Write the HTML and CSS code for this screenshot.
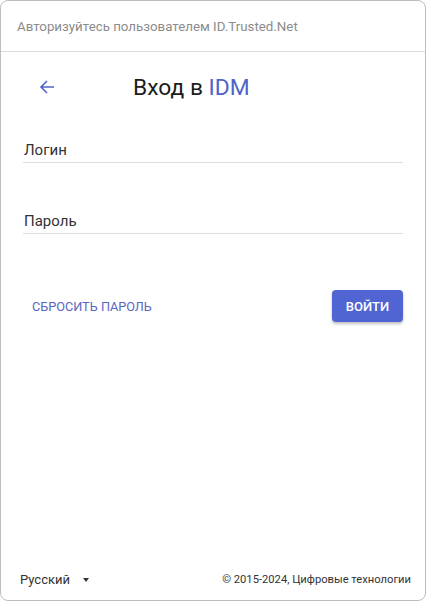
FILE: index.html
```html
<!DOCTYPE html>
<html lang="ru">
  <head>
    <meta charset="UTF-8" />
    <meta name="viewport" content="width=device-width, initial-scale=1.0" />
    <title>Вход в IDM</title>
    <link rel="stylesheet" href="styles.css">
  </head>
  <body>
    <main class="card">
      <header class="top">Авторизуйтесь пользователем ID.Trusted.Net</header>

      <section class="login">
        <div class="title">
          <button class="back" aria-label="Назад">
            <svg width="16" height="16" viewBox="0 0 16 16">
              <path d="M15 8H2.5M8 2L2 8l6 6" fill="none" stroke="currentColor" stroke-width="1.6" />
            </svg>
          </button>
          <h1>Вход в <span>IDM</span></h1>
        </div>

        <label class="field">
          <input type="text" placeholder="Логин" />
        </label>
        <label class="field">
          <input type="password" placeholder="Пароль" />
        </label>

        <div class="actions">
          <a href="#" class="reset">Сбросить пароль</a>
          <button class="enter">Войти</button>
        </div>
      </section>

      <footer>
        <div class="lang">Русский <span class="caret"></span></div>
        <div class="copy">© 2015-2024, Цифровые технологии</div>
      </footer>
    </main>
  </body>
</html>
```

FILE: styles.css
```css
*,
*::before,
*::after {
  box-sizing: border-box;
  margin: 0;
  padding: 0;
}
html {
  font-family: Roboto, "Liberation Sans", sans-serif;
}
body {
  background: #fff;
  width: 427px;
  height: 601px;
}
.card {
  width: 426px;
  height: 601px;
  border: 1px solid #bdbdbd;
  border-radius: 8px;
  display: flex;
  flex-direction: column;
  overflow: hidden;
}
.top {
  height: 51px;
  border-bottom: 1px solid #dcdcdc;
  padding-left: 16px;
  display: flex;
  align-items: center;
  font-size: 13.3px;
  color: #8c8c8c;
}
.login {
  flex-grow: 1;
  padding: 0 22px;
}
.title {
  display: flex;
  align-items: center;
  height: 70px;
  & .back {
    background: none;
    border: none;
    color: #4f63c9;
    margin-left: 16px;
    width: 16px;
    height: 16px;
    display: flex;
    cursor: pointer;
  }
  & h1 {
    font-weight: 400;
    font-size: 22.8px;
    color: #1c1c1c;
    margin-left: 78px;
    & span {
      color: #5063c8;
    }
  }
}
.field {
  display: block;
  margin-top: 15px;
  & + .field {
    margin-top: 45px;
  }
  & input {
    width: 100%;
    border: none;
    border-bottom: 1px solid #dedede;
    outline: none;
    font-family: inherit;
    font-size: 15px;
    height: 26px;
    padding: 0 1px;
    color: #333;
    &::placeholder {
      color: #333;
    }
  }
}
.actions {
  display: flex;
  align-items: center;
  justify-content: space-between;
  margin-top: 56px;
  & .reset {
    color: #5a66c4;
    text-decoration: none;
    text-transform: uppercase;
    font-size: 12.7px;
    margin-left: 9px;
  }
  & .enter {
    background: #5065d2;
    color: #fff;
    border: none;
    border-radius: 4px;
    font-family: inherit;
    font-weight: 500;
    font-size: 13px;
    text-transform: uppercase;
    width: 71px;
    height: 32px;
    box-shadow: 0 2px 3px rgba(0, 0, 0, 0.25);
  }
}
footer {
  display: flex;
  justify-content: space-between;
  align-items: center;
  padding: 0 14px 13px 19px;
  font-size: 11.2px;
  color: #333;
  & .lang {
    font-size: 13px;
    display: flex;
    align-items: center;
    gap: 13px;
  }
  & .caret {
    width: 0;
    height: 0;
    border-left: 3.5px solid transparent;
    border-right: 3.5px solid transparent;
    border-top: 4px solid #333;
  }
}
```
